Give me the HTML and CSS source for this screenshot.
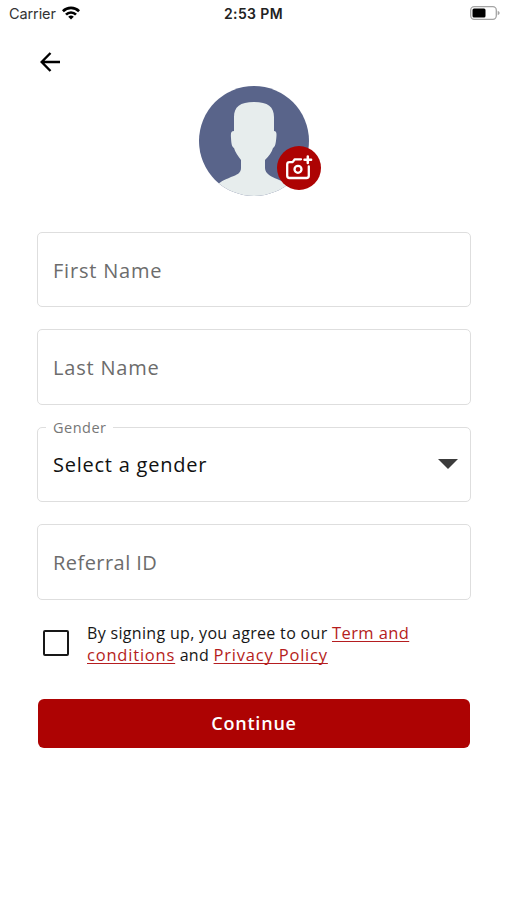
FILE: index.html
```html
<!DOCTYPE html>
<html lang="en">
<head>
<meta charset="utf-8">
<title>Sign up</title>
<link rel="stylesheet" href="styles.css">
</head>
<body>
<header class="status">
  <div class="carrier"><span class="carrier-name">Carrier</span>
    <svg class="wifi" viewBox="0 0 18 14" width="18" height="14" fill="none" stroke="#000" stroke-width="2.7"><path d="M.9 5.2a11.4 11.4 0 0 1 16.2 0M4 8.6a7 7 0 0 1 10 0"/><path d="M9 13.6 6.2 10.8a4 4 0 0 1 5.6 0z" fill="#000" stroke="none"/></svg>
  </div>
  <span class="time">2:53 PM</span>
  <svg class="battery" viewBox="0 0 30 14" width="30" height="14"><rect x=".7" y=".7" width="25.6" height="12.6" rx="3.5" fill="#fff" stroke="#a4a4a4" stroke-width="1.3"/><rect x="2.5" y="2.4" width="13" height="9.2" rx="1.5"/><path d="M27.7 4.7q2 .7 2 2.3t-2 2.3z" fill="#a4a4a4"/></svg>
</header>
<nav class="nav">
  <svg viewBox="0 0 20 20" width="20" height="20" fill="none" stroke="#000" stroke-width="2.4"><path d="M20 10H2M10.500 1 1.700 10l8.800 9"/></svg>
</nav>
<main class="page">
  <div class="avatar">
    <svg viewBox="0 0 110 110" width="110" height="110"><defs><clipPath id="disc"><circle cx="55" cy="55" r="55"/></clipPath></defs><g clip-path="url(#disc)"><path fill="#59648a" d="M0 0h110v110H0z"/><path fill="#e7eded" d="M35 45V31c0-10 6-15 20-15s20 5 20 15v14c2.500 0 2.800 2 2.300 7-.5 6-1.300 9-3.300 10-1 4-4 8-8 12v8c0 6 7 9 12 11 7 3 13 6 16 9v15H12L19 98c5-4 9-5 13-7 6-2 10-4 10-9v-8c-3-4-6-8-7-12-2-1-2.700-4-3-10-.4-5 0-7 3-7z"/></g></svg>
    <span class="camera"><svg viewBox="0 0 28 26" width="28" height="26" fill="none" stroke="#fff" stroke-width="2.300"><path d="M16 4.300H9.800L7.600 7.100H4.500Q2.200 7.100 2.200 9.400v11.300Q2.200 23 4.500 23h17Q23.800 23 23.800 20.700V11.500" stroke-linecap="round" stroke-linejoin="round"/><circle cx="13" cy="14.300" r="3.500"/><path d="M22.800 1.400v6.600M19.500 4.700h6.600" stroke-width="2.500" stroke-linecap="round"/></svg></span>
  </div>
  <form class="form">
    <div class="field"><span class="hint first">First Name</span></div>
    <div class="field"><span class="hint last">Last Name</span></div>
    <div class="field select"><span class="legend">Gender</span><span class="value">Select a gender</span>
      <svg class="caret" viewBox="0 0 20 10" width="20" height="10"><path fill="#3c3c3c" d="M0 0h20L10 10z"/></svg></div>
    <div class="field"><span class="hint ref">Referral ID</span></div>
    <div class="agree"><span class="box"></span>
      <p class="terms"><span class="t1">By signing up, you agree to our <a>Term and</a></span><br><span class="t2"><a class="wide">conditions</a> and <a class="wide">Privacy Policy</a></span></p></div>
    <div class="button"><span>Continue</span></div>
  </form>
</main>
</body>
</html>
```
FILE: styles.css
```css
* { box-sizing: border-box; }
body { margin: 0; height: 900px; background: #fff; font-family: "Open Sans", sans-serif; color: #161616; }
svg { display: block; flex: none; }
.status { height: 28px; padding: 0 7px 2px 9px; display: grid; grid-template-columns: 1fr auto 1fr; align-items: center; font-family: Inter, sans-serif; }
.carrier { display: flex; align-items: center; gap: 6px; font-size: 14.5px; color: #333; }
.carrier-name { letter-spacing: -.1px; }
.time { font-size: 14px; font-weight: 600; color: #222; letter-spacing: .4px; position: relative; left: -1px; }
.battery { justify-self: end; }
.nav { height: 58px; padding: 24px 40px 0; }
.page { padding: 0 36px 0 37px; }
.avatar { position: relative; width: 110px; height: 110px; margin-left: 162px; }
.camera { position: absolute; left: 78px; top: 60px; width: 44px; height: 44px; border-radius: 50%; background: #ad0303; display: grid; place-items: center; }
.form { display: flex; flex-direction: column; gap: 22px; margin-top: 36px; }
.field { height: 75.400px; border: 1.500px solid #dedede; border-radius: 5px; display: flex; align-items: center; padding: 0 12px 0 15px; position: relative; }
.hint { font-size: 20px; letter-spacing: .8px; color: #6c6c6c; padding-top: 1px; }
.ref { letter-spacing: .45px; }
.select { justify-content: space-between; }
.legend { position: absolute; left: 8px; top: -10px; padding: 0 6px 0 7px; line-height: 20px; background: #fff; color: #777; font-size: 14.500px; letter-spacing: .5px; }
.value { font-size: 20px; letter-spacing: .76px; color: #111; }
.agree { display: flex; align-items: center; height: 55px; margin-top: -6px; padding-left: 6px; }
.box { width: 26px; height: 26px; border: 2.500px solid #181818; border-radius: 2px; }
.terms { margin: 2px 0 0 18px; font-size: 16px; line-height: 21px; letter-spacing: .32px; white-space: nowrap; }
.terms a { color: #b51d20; font-size: 16.500px; letter-spacing: .4px; text-decoration: underline; text-underline-offset: 2px; text-decoration-thickness: 1px; text-decoration-skip-ink: none; }
.terms .wide { letter-spacing: .8px; }
.button { height: 49px; margin: 6px 1px 0 1px; border-radius: 6px; background: #ad0303; color: #fff; display: grid; place-items: center; font-size: 18px; font-weight: 600; letter-spacing: .8px; }
```
